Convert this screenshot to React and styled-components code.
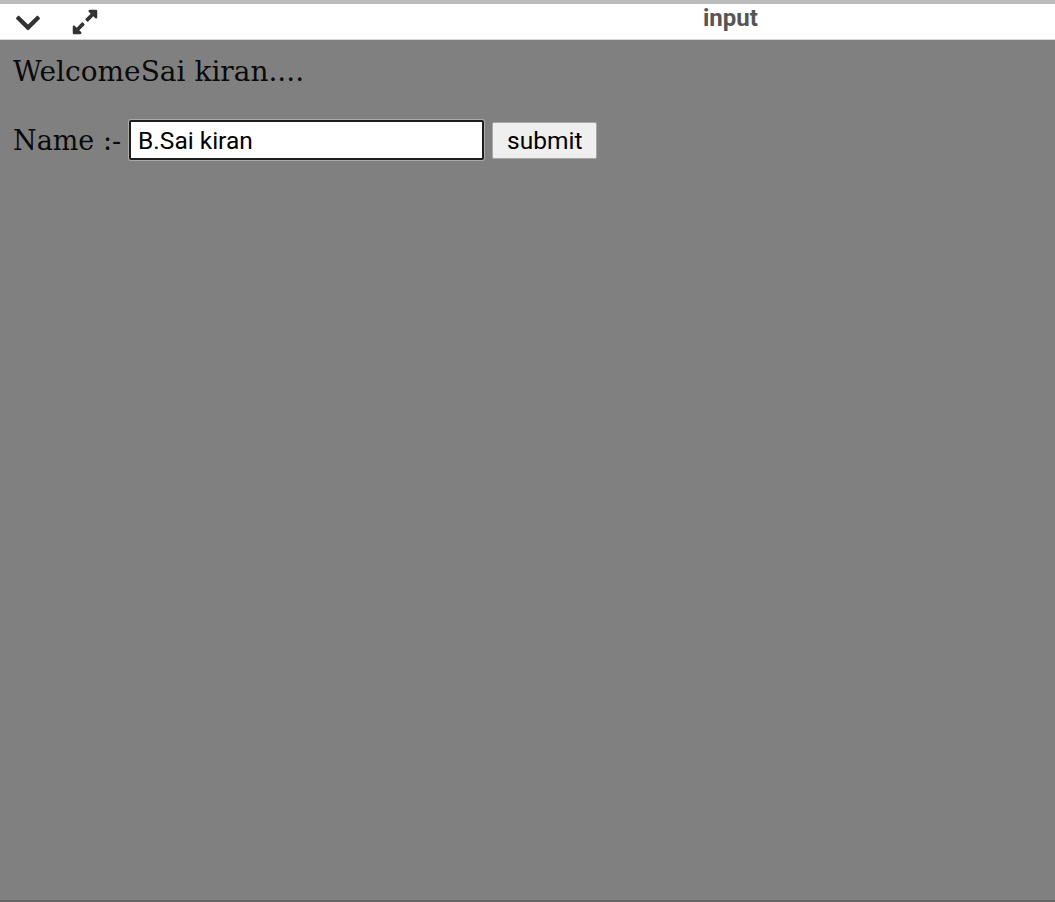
import React from 'react';
import styled, { createGlobalStyle } from 'styled-components';
import { FaChevronDown, FaExpandAlt } from 'react-icons/fa';

const GlobalStyle = createGlobalStyle`
  html, body {
    margin: 0;
    padding: 0;
    height: 100%;
  }
  body {
    background: #808080;
  }
`;

const Frame = styled.div`
  display: flex;
  flex-direction: column;
  height: 902px;
  border-top: 4px solid #bbbbbb;
  border-bottom: 2px solid #666666;
  box-sizing: border-box;
`;

const Toolbar = styled.div`
  display: flex;
  align-items: center;
  height: 35px;
  background: #ffffff;
  border-bottom: 1px solid #d8d8d8;
  color: #333333;
`;

const IconButton = styled.span`
  display: flex;
  align-items: center;
  justify-content: center;
  width: ${props => props.width}px;
  padding-top: ${props => props.drop || 0}px;
  font-size: ${props => props.size}px;
  color: #333333;
`;

const Title = styled.span`
  align-self: flex-start;
  margin-left: ${props => props.offset}px;
  font-family: Roboto, "Liberation Sans", sans-serif;
  font-weight: 700;
  font-size: 24px;
  line-height: 28px;
  color: #555555;
`;

const Content = styled.main`
  flex: 1;
  padding: 13px 13px;
  font-family: "DejaVu Serif", "Liberation Serif", serif;
  color: #0a0a0a;
`;

const Welcome = styled.div`
  font-size: 28px;
  line-height: 38px;
`;

const Form = styled.form`
  display: flex;
  align-items: center;
  gap: 8px;
  margin-top: 29px;
`;

const Label = styled.label`
  font-size: 27px;
`;

const NameInput = styled.input`
  width: 355px;
  height: 40px;
  box-sizing: border-box;
  padding: 0 7px;
  border: 2px solid #1e1e1e;
  border-radius: 2px;
  box-shadow: 0 0 0 1px #aaaaaa;
  background: #ffffff;
  font-family: Roboto, "Liberation Sans", sans-serif;
  font-size: 24.5px;
  color: #000000;
  outline: none;
`;

const SubmitButton = styled.button`
  height: 37px;
  padding: 0 14px;
  border: 1px solid #a8a8a8;
  border-radius: 2px;
  background: #efefef;
  font-family: Roboto, "Liberation Sans", sans-serif;
  font-size: 24.5px;
  color: #000000;
`;

export default function App() {
  const [name, setName] = React.useState('B.Sai kiran');

  return (
    <>
      <GlobalStyle />
      <Frame>
        <Toolbar>
          <IconButton width={56} size={28} drop={3}>
            <FaChevronDown />
          </IconButton>
          <IconButton width={58} size={28}>
            <FaExpandAlt />
          </IconButton>
          <Title offset={589}>input</Title>
        </Toolbar>
        <Content>
          <Welcome>WelcomeSai kiran....</Welcome>
          <Form onSubmit={e => e.preventDefault()}>
            <Label htmlFor="name">Name :-</Label>
            <NameInput id="name" value={name} onChange={e => setName(e.target.value)} />
            <SubmitButton type="submit">submit</SubmitButton>
          </Form>
        </Content>
      </Frame>
    </>
  );
}
